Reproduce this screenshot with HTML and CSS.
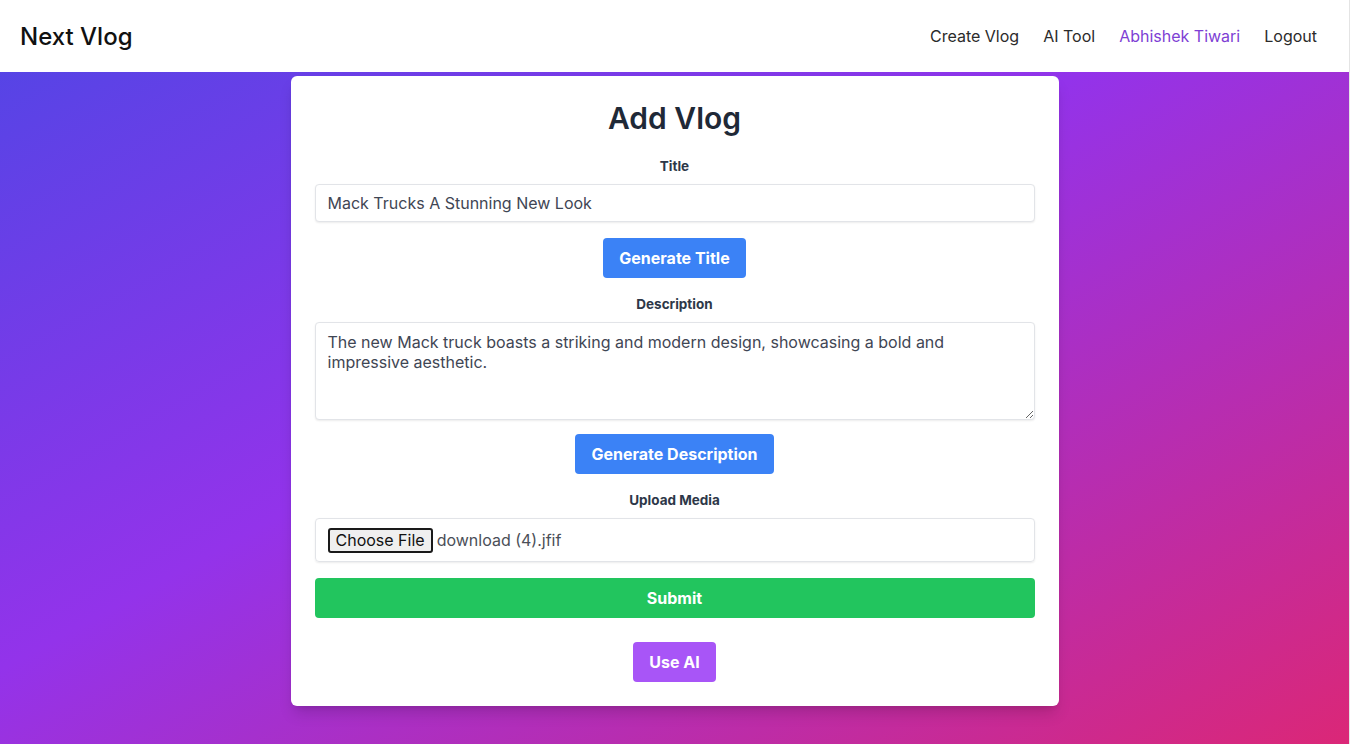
FILE: index.html
```html
<!DOCTYPE html>
<html lang="en">
<head>
<meta charset="utf-8">
<title>Next Vlog</title>
<link rel="stylesheet" href="styles.css">
</head>
<body>
<div class="page">
  <header class="navbar">
    <div class="brand">Next Vlog</div>
    <nav class="nav-links">
      <a class="nav-link" href="#">Create Vlog</a>
      <a class="nav-link" href="#">AI Tool</a>
      <a class="nav-link nav-user" href="#">Abhishek Tiwari</a>
      <a class="nav-link" href="#">Logout</a>
    </nav>
  </header>
  <main class="main">
    <form class="card">
      <h1 class="card-title">Add Vlog</h1>
      <label class="field-label">Title</label>
      <input class="text-input" type="text" value="Mack Trucks A Stunning New Look">
      <div class="btn-row"><button type="button" class="btn btn-blue">Generate Title</button></div>
      <label class="field-label">Description</label>
      <textarea class="text-area">The new Mack truck boasts a striking and modern design, showcasing a bold and impressive aesthetic.</textarea>
      <div class="btn-row btn-row-tight"><button type="button" class="btn btn-blue">Generate Description</button></div>
      <label class="field-label">Upload Media</label>
      <div class="file-box">
        <span class="file-btn">Choose File</span>
        <span class="file-name">download (4).jfif</span>
      </div>
      <button type="button" class="btn btn-green">Submit</button>
      <div class="btn-row btn-row-ai"><button type="button" class="btn btn-purple">Use AI</button></div>
    </form>
  </main>
</div>
</body>
</html>
```
FILE: styles.css
```css
* { box-sizing: border-box; }
html { background: #ffffff; height: 100%; }
body {
  margin: 0;
  height: 100%;
  font-family: Inter, "Noto Sans", sans-serif;
}
.page {
  min-height: 100%;
  height: 744px;
  margin-right: 1px;
  border-right: 1px solid #e4e4e4;
  background: linear-gradient(to bottom right, #4f46e5, #9333ea 45%, #db2777);
  display: flex;
  flex-direction: column;
  overflow: hidden;
}
.navbar {
  height: 72px;
  flex: none;
  background: #ffffff;
  display: flex;
  align-items: center;
  justify-content: space-between;
  padding: 0 32px 0 20px;
}
.brand {
  font-size: 24px;
  font-weight: 500;
  color: #111111;
}
.nav-links { display: flex; gap: 24px; }
.nav-link {
  font-size: 16px;
  color: #2b2b2b;
  text-decoration: none;
}
.nav-user { color: #7e3fd4; }
.main {
  display: flex;
  justify-content: center;
  padding-top: 4px;
}
.card {
  width: 768px;
  background: #ffffff;
  border-radius: 6px;
  padding: 24px;
  display: flex;
  flex-direction: column;
  box-shadow: 0 10px 15px -3px rgba(0,0,0,0.15), 0 4px 6px -4px rgba(0,0,0,0.12);
}
.card-title {
  margin: 0 0 22px;
  font-size: 30px;
  line-height: 36px;
  font-weight: 600;
  text-align: center;
  color: #1f2937;
}
.field-label {
  display: block;
  text-align: center;
  font-size: 13.5px;
  line-height: 16px;
  font-weight: 700;
  color: #2d3748;
  margin-bottom: 10px;
}
.text-input, .text-area {
  width: 100%;
  border: 1px solid #e2e4e8;
  border-radius: 4px;
  box-shadow: 0 1px 2px rgba(0,0,0,0.08);
  font-family: Inter, "Noto Sans", sans-serif;
  font-size: 16px;
  color: #3f4654;
  padding: 8px 12px;
  line-height: 20px;
  outline: none;
}
.text-input { height: 38px; }
.text-area { height: 98px; resize: vertical; padding-top: 9px; display: block; }
.btn-row {
  display: flex;
  justify-content: center;
  margin: 16px 0 18px;
}
.btn-row-tight { margin-top: 14px; }
.btn-row-ai { margin: 24px 0 0; }
.btn {
  border: none;
  border-radius: 4px;
  height: 40px;
  padding: 0 16px;
  font-family: Inter, "Noto Sans", sans-serif;
  font-size: 16px;
  font-weight: 700;
  color: #ffffff;
  cursor: pointer;
}
.btn-blue { background: #3b82f6; }
.btn-green { background: #22c55e; width: 100%; }
.btn-purple { background: #a855f7; }
.file-box {
  height: 44px;
  border: 1px solid #e2e4e8;
  border-radius: 4px;
  box-shadow: 0 1px 2px rgba(0,0,0,0.08);
  display: flex;
  align-items: center;
  padding: 0 12px;
  gap: 4px;
  margin-bottom: 16px;
}
.file-btn {
  height: 25px;
  padding: 0 6px;
  border: 2px solid #1a1a1a;
  border-radius: 3px;
  background: #efefef;
  font-size: 16px;
  line-height: 21px;
  color: #111111;
}
.file-name {
  font-size: 16px;
  color: #4b4f58;
}
```
